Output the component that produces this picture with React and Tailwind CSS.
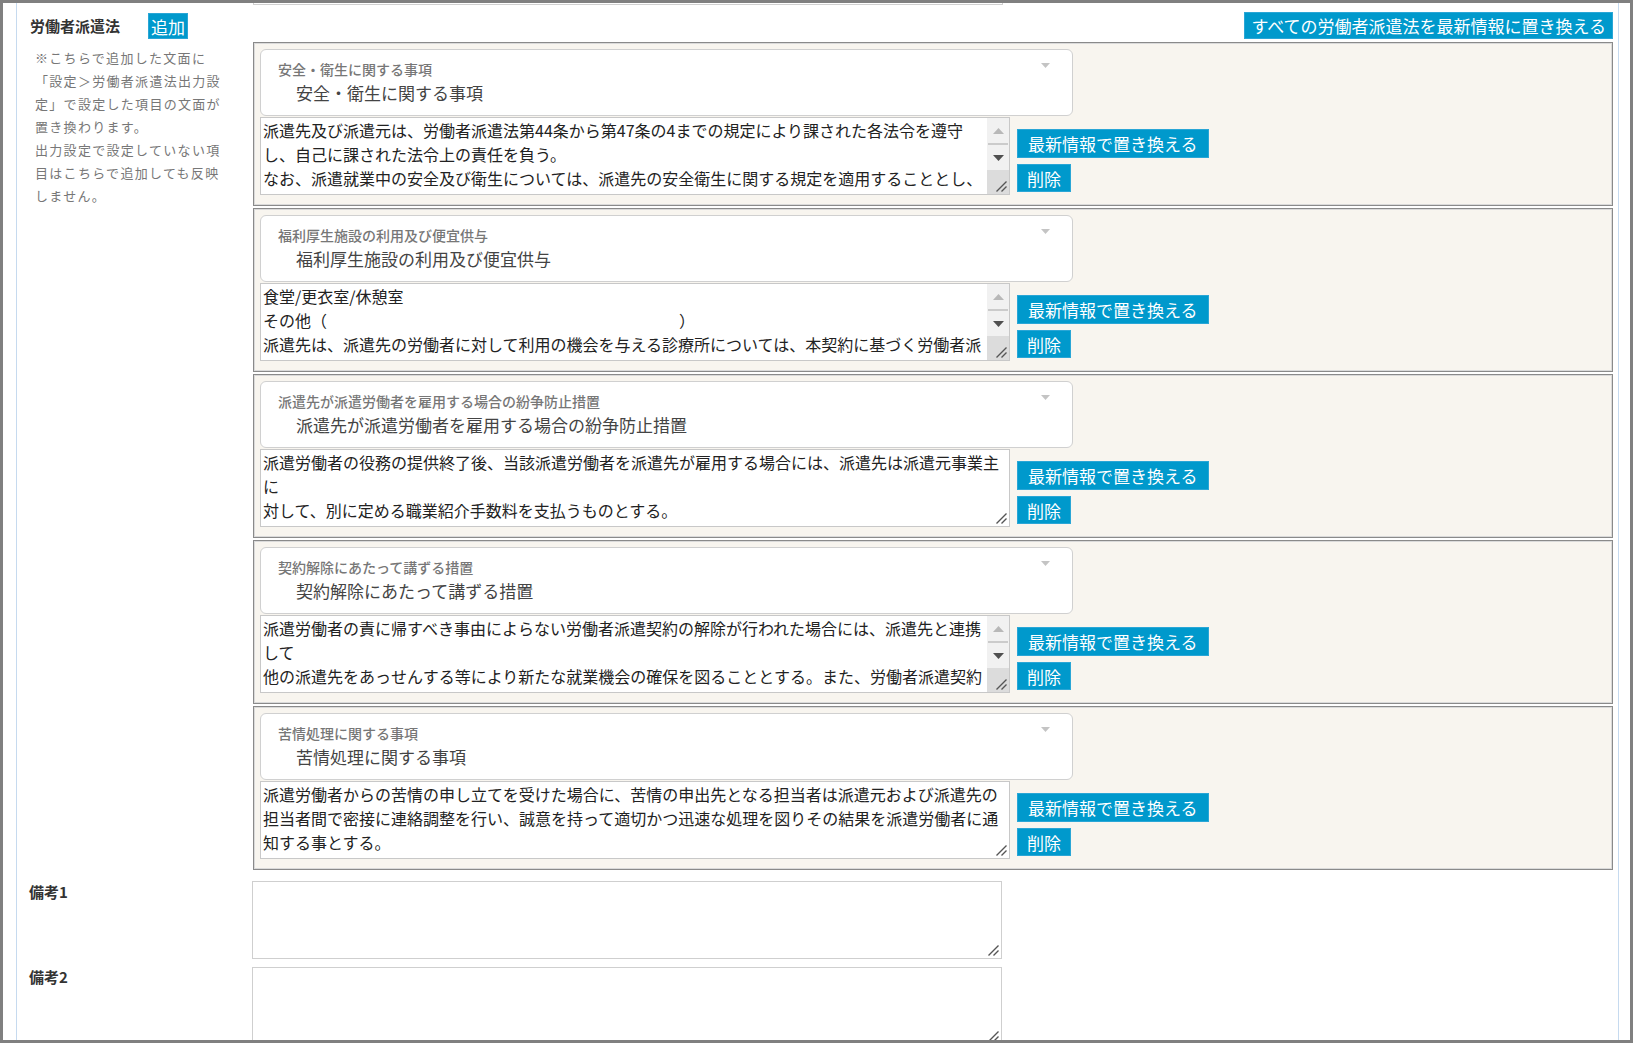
import React from 'react';

const clauses = [
  {
    title: '安全・衛生に関する事項',
    scroll: true,
    lines: [
      '派遣先及び派遣元は、労働者派遣法第44条から第47条の4までの規定により課された各法令を遵守',
      'し、自己に課された法令上の責任を負う。',
      'なお、派遣就業中の安全及び衛生については、派遣先の安全衛生に関する規定を適用することとし、',
    ],
  },
  {
    title: '福利厚生施設の利用及び便宜供与',
    scroll: true,
    lines: [
      '食堂/更衣室/休憩室',
      'その他（　　　　　　　　　　　　　　　　　　　　　　）',
      '派遣先は、派遣先の労働者に対して利用の機会を与える診療所については、本契約に基づく労働者派',
    ],
  },
  {
    title: '派遣先が派遣労働者を雇用する場合の紛争防止措置',
    scroll: false,
    lines: [
      '派遣労働者の役務の提供終了後、当該派遣労働者を派遣先が雇用する場合には、派遣先は派遣元事業主',
      'に',
      '対して、別に定める職業紹介手数料を支払うものとする。',
    ],
  },
  {
    title: '契約解除にあたって講ずる措置',
    scroll: true,
    lines: [
      '派遣労働者の責に帰すべき事由によらない労働者派遣契約の解除が行われた場合には、派遣先と連携',
      'して',
      '他の派遣先をあっせんする等により新たな就業機会の確保を図ることとする。また、労働者派遣契約',
    ],
  },
  {
    title: '苦情処理に関する事項',
    scroll: false,
    lines: [
      '派遣労働者からの苦情の申し立てを受けた場合に、苦情の申出先となる担当者は派遣元および派遣先の',
      '担当者間で密接に連絡調整を行い、誠意を持って適切かつ迅速な処理を図りその結果を派遣労働者に通',
      '知する事とする。',
    ],
  },
];

const Grip = () => (
  <svg width="12" height="12" viewBox="0 0 12 12">
    <path d="M11.5 1.5 L1.5 11.5 M11.5 6.5 L6.5 11.5" stroke="#555" strokeWidth="1.4" fill="none" />
  </svg>
);

const ScrollBar = () => (
  <div className="flex w-[22px] shrink-0 flex-col bg-[#f1f1f1]">
    <div className="flex h-[25px] items-center justify-center">
      <svg width="11" height="6" viewBox="0 0 11 6">
        <path d="M0 6 L5.5 0 L11 6 Z" fill="#b8b8b8" />
      </svg>
    </div>
    <div className="mx-[1px] h-[2px] bg-[#cbcbcb]" />
    <div className="flex h-[25px] items-center justify-center">
      <svg width="11" height="6" viewBox="0 0 11 6">
        <path d="M0 0 L11 0 L5.5 6 Z" fill="#505050" />
      </svg>
    </div>
    <div className="flex flex-1 items-end justify-end bg-[#dcdcdc] pb-[2px] pr-[2px]">
      <Grip />
    </div>
  </div>
);

const TextBox = ({ lines = [], scroll }) => (
  <div className="flex h-[78px] w-[750px] shrink-0 border border-[#c8c8c8] bg-white">
    <div className="relative flex-1 overflow-hidden pl-[2px] text-[16px] leading-[24px] text-[#222]">
      {lines.map((line, i) => (
        <div key={i} className="whitespace-pre">{line}</div>
      ))}
      {!scroll && (
        <div className="absolute bottom-[2px] right-[2px] flex">
          <Grip />
        </div>
      )}
    </div>
    {scroll && <ScrollBar />}
  </div>
);

const BlueButton = ({ children, className = '' }) => (
  <button
    type="button"
    className={`flex items-center justify-center whitespace-nowrap border border-[#2aa6d6] bg-[#0099cc] text-[17px] leading-none text-white ${className}`}
  >
    {children}
  </button>
);

const ClausePanel = ({ title, lines, scroll }) => (
  <div className="h-[164px] border border-[#8a8a8a] bg-[#f8f5ef] pl-[6px] pt-[6px] shadow-[inset_0_0_0_1px_#dadada]">
    {/* select */}
    <div className="relative h-[67px] w-[813px] rounded-[6px] border border-[#d0d0d0] bg-white pl-[17px] pt-[9px]">
      <div className="text-[14px] font-medium leading-[20px] text-[#777]">{title}</div>
      <div className="mt-[2px] pl-[18px] text-[17px] leading-[24px] text-[#444]">{title}</div>
      <svg className="absolute right-[22px] top-[13px]" width="9" height="5" viewBox="0 0 9 5">
        <path d="M0 0 L9 0 L4.5 5 Z" fill="#c4c4c4" />
      </svg>
    </div>

    {/* text + actions */}
    <div className="mt-[1px] flex items-start">
      <TextBox lines={lines} scroll={scroll} />
      <div className="ml-[7px] mt-[12px] flex flex-col items-start gap-[6px]">
        <BlueButton className="h-[29px] px-[10px]">最新情報で置き換える</BlueButton>
        <BlueButton className="h-[28px] px-[9px]">削除</BlueButton>
      </div>
    </div>
  </div>
);

const NoteBox = () => (
  <div className="relative h-[78px] w-[750px] border border-[#cfcfcf] bg-white">
    <div className="absolute bottom-[2px] right-[2px] flex">
      <Grip />
    </div>
  </div>
);

export default function App() {
  return (
    <div className="h-screen w-full overflow-hidden border-[3px] border-[#808080] bg-white font-['Noto_Sans_CJK_JP',sans-serif]">
      <div className="ml-[13px] mr-[11px] h-full overflow-hidden border-x border-[#c6daef]">

        {/* 労働者派遣法 */}
        <div className="flex">
          <div className="w-[236px] shrink-0 pl-[13px] pt-[10px]">
            <div className="flex items-center gap-[28px]">
              <span className="text-[15px] font-bold leading-[20px] text-[#333]">労働者派遣法</span>
              <BlueButton className="h-[26px] px-[2px]">追加</BlueButton>
            </div>
            <div className="mt-[7px] pl-[5px] text-[13px] leading-[23px] tracking-[0.1em] text-[#777]">
              <div>※こちらで追加した文面に</div>
              <div>「設定＞労働者派遣法出力設</div>
              <div>定」で設定した項目の文面が</div>
              <div>置き換わります。</div>
              <div>出力設定で設定していない項</div>
              <div>目はこちらで追加しても反映</div>
              <div>しません。</div>
            </div>
          </div>

          <div className="w-[1360px] shrink-0">
            <div className="h-[2px] w-[750px] border-x border-b border-[#d0d0d0]" />
            <div className="mt-[7px] flex justify-end">
              <BlueButton className="h-[27px] px-[6px]">すべての労働者派遣法を最新情報に置き換える</BlueButton>
            </div>
            <div className="mt-[3px] flex flex-col gap-[2px]">
              {clauses.map((c) => (
                <ClausePanel key={c.title} {...c} />
              ))}
            </div>
          </div>
        </div>

        {/* 備考1 */}
        <div className="mt-[11px] flex">
          <div className="w-[235px] shrink-0 pl-[12px] pt-[1px] text-[15px] font-bold leading-[20px] text-[#333]">備考1</div>
          <NoteBox />
        </div>

        {/* 備考2 */}
        <div className="mt-[8px] flex">
          <div className="w-[235px] shrink-0 pl-[12px] text-[15px] font-bold leading-[20px] text-[#333]">備考2</div>
          <NoteBox />
        </div>

      </div>
    </div>
  );
}
